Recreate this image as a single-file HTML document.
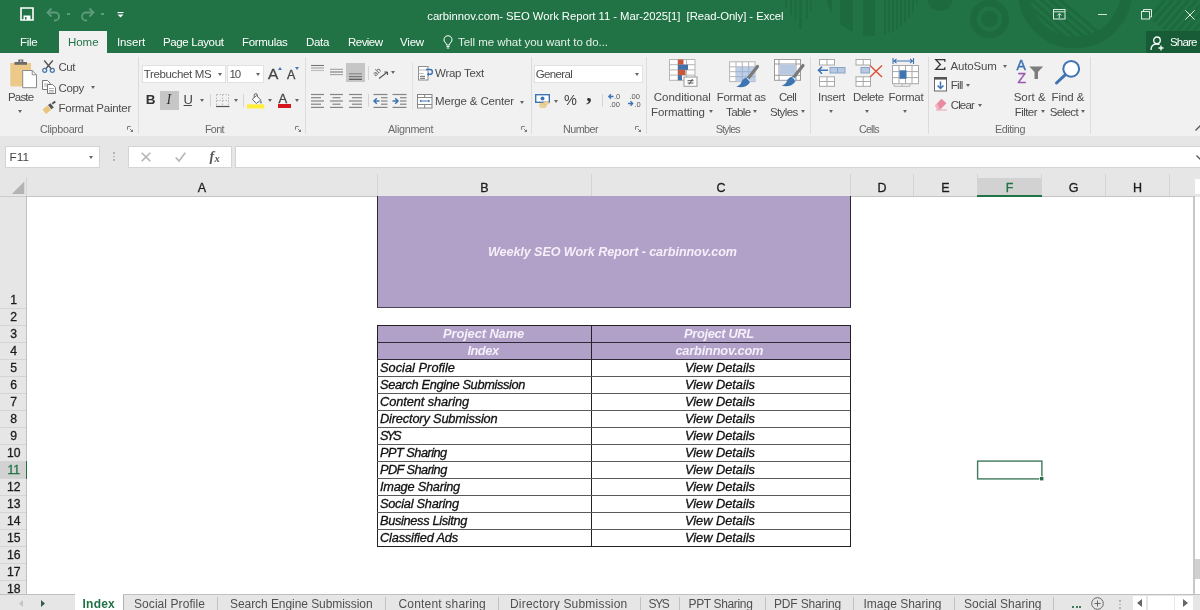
<!DOCTYPE html>
<html><head><meta charset="utf-8">
<style>
*{box-sizing:border-box;margin:0;padding:0}
html,body{width:1200px;height:610px;overflow:hidden;background:#fff}
body{font-family:"Liberation Sans",sans-serif;position:relative;color:#444}
.abs,.abs>*{position:absolute}
.t{position:absolute;white-space:pre;line-height:20px;height:20px}
#wrap{position:absolute;left:0;top:0;width:1200px;height:610px;will-change:transform}
#title{left:0;top:0;width:1200px;height:53px;background:#217346;overflow:hidden}
#ribbon{left:0;top:53px;width:1200px;height:83px;background:#f1f1f1}
#fbar{left:0;top:136px;width:1200px;height:42px;background:#e6e6e6}
#sheet{left:0;top:178px;width:1200px;height:416px;background:#fff;overflow:hidden}
#tabs{left:0;top:594px;width:1200px;height:16px;background:#e6e6e6;overflow:hidden}
.sep{position:absolute;width:1px;background:#dadada}
.dd{position:absolute;width:0;height:0;border-left:2.5px solid transparent;border-right:2.5px solid transparent;border-top:3px solid #666}
svg{position:absolute;overflow:visible}
</style></head><body><div id="wrap">
<div id="title" class="abs"></div>
<svg style="left:780px;top:0" width="420" height="53" viewBox="780 0 420 53">
 <defs>
  <clipPath id="c1"><circle cx="802" cy="-4" r="32"/></clipPath>
  <clipPath id="c2"><circle cx="872" cy="-11" r="47"/></clipPath>
  <clipPath id="c3"><circle cx="1075" cy="-9" r="46"/></clipPath>
  <clipPath id="c4"><circle cx="1192" cy="-14" r="52"/></clipPath>
  <clipPath id="cT"><rect x="780" y="0" width="420" height="53"/></clipPath>
 </defs>
 <g clip-path="url(#cT)">
 <g fill="#1d6a3e">
  <rect x="785" y="0" width="2" height="8"/><rect x="790" y="0" width="2" height="15"/><rect x="794.500" y="0" width="2" height="21"/><rect x="799" y="0" width="3" height="29"/><rect x="806" y="0" width="2" height="19"/><rect x="810" y="0" width="1.500" height="11"/>
  <g clip-path="url(#c2)"><rect x="824" y="0" width="8" height="40"/><rect x="840" y="0" width="13" height="40"/><rect x="863" y="0" width="12" height="40"/><rect x="884" y="0" width="2" height="40"/><rect x="888" y="0" width="2" height="40"/><rect x="892" y="0" width="2" height="40"/><rect x="896" y="0" width="2" height="40"/><rect x="900" y="0" width="2" height="40"/><rect x="904" y="0" width="2" height="40"/><rect x="908" y="0" width="2" height="40"/><rect x="912" y="0" width="2" height="40"/><rect x="916" y="0" width="2" height="40"/></g>
  <circle cx="940" cy="-2" r="13"/>
  <circle cx="989.500" cy="19" r="16" fill="none" stroke="#1d6a3e" stroke-width="7" />
  <circle cx="989.500" cy="19" r="8.500"/>
 </g>
 <circle cx="1075" cy="-9" r="51.500" fill="none" stroke="#1d6a3e" stroke-width="11.500"/>
 <g clip-path="url(#c3)" stroke="#1d6a3e" stroke-width="3.200">
  <path d="M1020 -2l60 52M1020 -10l70 60M1024 -15l72 62M1032 -16l70 60M1040 -17l66 56M1016 4l60 52M1012 10l60 52"/>
 </g>
 <g clip-path="url(#c4)" stroke="#1d6a3e" stroke-width="3.200">
  <path d="M1170 -6l-40 46M1178 -6l-40 46M1186 -6l-40 46M1194 -6l-40 46M1202 -6l-40 46M1210 -6l-40 46M1218 -6l-40 46M1226 -6l-40 46"/>
 </g>
 </g>
</svg>
<svg style="left:20px;top:7px" width="14" height="14" viewBox="0 0 14 14"><path d="M1 1h12v12H1z" fill="none" stroke="#fff" stroke-width="1.600"/><rect x="3.500" y="8.500" width="7" height="4.500" fill="#fff"/><rect x="5" y="10" width="1.500" height="2.500" fill="#217346"/><rect x="3" y="1" width="8" height="4.500" fill="none" stroke="#fff" stroke-width="0"/></svg>
<svg style="left:46px;top:8px" width="16" height="13" viewBox="0 0 16 13"><path d="M2 4.500h7a4 4 0 0 1 0 8H8" fill="none" stroke="#5c9c79" stroke-width="1.800"/><path d="M5.500 0.500L1.500 4.500l4 4" fill="none" stroke="#5c9c79" stroke-width="1.800"/></svg>
<svg style="left:79px;top:8px" width="16" height="13" viewBox="0 0 16 13"><path d="M14 4.500H7a4 4 0 0 0 0 8H8" fill="none" stroke="#5c9c79" stroke-width="1.800"/><path d="M10.500 0.500l4 4-4 4" fill="none" stroke="#5c9c79" stroke-width="1.800"/></svg>
<div class="abs" style="left:67px;top:13px;width:3px;height:2px;background:#5c9c79"></div>
<div class="abs" style="left:101px;top:13px;width:3px;height:2px;background:#5c9c79"></div>
<svg style="left:116.500px;top:11.800px" width="7" height="6" viewBox="0 0 7 6"><rect x=".5" y="0" width="6" height="1.100" fill="#fff"/><path d="M.5 2.500h6L3.500 5.500z" fill="#fff"/></svg>
<svg style="left:1053px;top:9px" width="13" height="11" viewBox="0 0 13 11"><rect x=".5" y=".5" width="11.500" height="9.500" fill="none" stroke="#dcebe2"/><path d="M.5 2.800h11.500" stroke="#dcebe2"/><path d="M6.300 9V4.800M4.300 6.500l2-2 2 2" fill="none" stroke="#dcebe2"/></svg>
<div class="abs" style="left:1098px;top:14px;width:9px;height:1px;background:#cfe3d7"></div>
<svg style="left:1141px;top:9px" width="11" height="11" viewBox="0 0 11 11"><path d="M2.500 2.500V.5h8v7.500h-2" fill="none" stroke="#dcebe2"/><rect x=".5" y="2.500" width="8" height="7.500" fill="none" stroke="#dcebe2"/></svg>
<svg style="left:1185px;top:9.500px" width="10" height="10" viewBox="0 0 10 10"><path d="M.3.300l9.400 9.400M9.700.3L.3 9.700" stroke="#e4f0e9" stroke-width="1"/></svg>
<div class="abs" style="left:1146px;top:31px;width:54px;height:22px;background:#185c37"></div>
<svg style="left:1149.500px;top:35.500px" width="14" height="15" viewBox="0 0 14 15"><circle cx="7" cy="4.300" r="3.300" fill="none" stroke="#fff" stroke-width="1.300"/><path d="M1 14c0-4 2.500-6 6-6 1 0 1.800.2 2.500.5" fill="none" stroke="#fff" stroke-width="1.300"/><path d="M11 9.500v5M8.500 12h5" stroke="#fff" stroke-width="1.300"/></svg>
<div class="abs" style="left:59px;top:31px;width:48px;height:23px;background:#f1f1f1"></div>
<svg style="left:443.300px;top:35.300px" width="10" height="14" viewBox="0 0 10 14"><path d="M5 .7a4 4 0 0 0-2.300 7.300c.5.500.8 1 .8 2h3c0-1 .3-1.500.8-2A4 4 0 0 0 5 .7z" fill="none" stroke="#fff" stroke-width="1"/><path d="M3.500 11.500h3M3.800 13h2.400" stroke="#fff" stroke-width="1"/></svg>

<div class="t" style="left:427.3px;top:5.8px;font-size:11.3px;color:#fff;letter-spacing:-0.052px;">carbinnov.com- SEO Work Report 11 - Mar-2025[1]  [Read-Only] - Excel</div>
<div class="t" style="left:1170.0px;top:32.3px;font-size:11.5px;color:#fff;letter-spacing:-0.797px;">Share</div>
<div class="t" style="left:20.0px;top:31.8px;font-size:11.5px;color:#fff;letter-spacing:-0.258px;">File</div>
<div class="t" style="left:68.0px;top:31.8px;font-size:11.5px;color:#217346;letter-spacing:-0.047px;">Home</div>
<div class="t" style="left:117.0px;top:31.8px;font-size:11.5px;color:#fff;letter-spacing:-0.128px;">Insert</div>
<div class="t" style="left:163.0px;top:31.8px;font-size:11.5px;color:#fff;letter-spacing:-0.372px;">Page Layout</div>
<div class="t" style="left:242.0px;top:31.8px;font-size:11.5px;color:#fff;letter-spacing:-0.305px;">Formulas</div>
<div class="t" style="left:306.0px;top:31.8px;font-size:11.5px;color:#fff;letter-spacing:-0.324px;">Data</div>
<div class="t" style="left:348.0px;top:31.8px;font-size:11.5px;color:#fff;letter-spacing:-0.536px;">Review</div>
<div class="t" style="left:400.0px;top:31.8px;font-size:11.5px;color:#fff;letter-spacing:-0.180px;">View</div>
<div class="t" style="left:458.0px;top:31.8px;font-size:11.5px;color:#e3efe8;letter-spacing:-0.050px;">Tell me what you want to do...</div>
<div id="ribbon" class="abs"></div>
<div class="sep" style="left:138.2px;top:57.0px;height:77.0px;background:#dcdcdc"></div>
<div class="sep" style="left:304.9px;top:57.0px;height:77.0px;background:#dcdcdc"></div>
<div class="sep" style="left:530.8px;top:57.0px;height:77.0px;background:#dcdcdc"></div>
<div class="sep" style="left:646.3px;top:57.0px;height:77.0px;background:#dcdcdc"></div>
<div class="sep" style="left:810.3px;top:57.0px;height:77.0px;background:#dcdcdc"></div>
<div class="sep" style="left:928.4px;top:57.0px;height:77.0px;background:#dcdcdc"></div>
<div class="sep" style="left:1090.0px;top:57.0px;height:77.0px;background:#dcdcdc"></div>
<svg style="left:9.0px;top:59.0px" width="29.0" height="30.0" viewBox="0 0 29 30"><rect x="1.300" y="4" width="20.700" height="23.400" fill="#ecc988"/><rect x="5.500" y="3" width="12.500" height="2.800" fill="#6b6b6b"/><rect x="9.300" y="0.500" width="5" height="3" fill="#6b6b6b"/><rect x="10.900" y="1.500" width="1.800" height="1.200" fill="#f1f1f1"/><path d="M13.700 11.500h9.500l4.300 4.300v12.900H13.700z" fill="#fff" stroke="#8a8a8a" stroke-width="1"/><path d="M23.200 11.500v4.300h4.300" fill="none" stroke="#8a8a8a" stroke-width="1"/></svg>
<div class="t" style="left:8.0px;top:87.2px;font-size:11.5px;color:#4c4c4c;letter-spacing:-0.824px;">Paste</div>
<div class="dd" style="left:18.2px;top:109.5px;border-top-color:#666"></div>
<svg style="left:42.0px;top:60.0px" width="13.0" height="13.0" viewBox="0 0 13 13"><path d="M2.200 0.500L9.600 9.300M10.800 0.500L3.400 9.300" stroke="#555" stroke-width="1.400" fill="none"/><circle cx="2.700" cy="10.300" r="2" fill="none" stroke="#4a78b0" stroke-width="1.300"/><circle cx="10.300" cy="10.300" r="2" fill="none" stroke="#4a78b0" stroke-width="1.300"/></svg>
<div class="t" style="left:58.5px;top:57.0px;font-size:11.5px;color:#4c4c4c;letter-spacing:-0.469px;">Cut</div>
<svg style="left:42.0px;top:80.0px" width="14.0" height="14.0" viewBox="0 0 14 14"><path d="M.5.500h5l2.500 2.500v6.500h-7.500z" fill="#fff" stroke="#777" stroke-width="1"/><path d="M2 4h4M2 6h4" stroke="#999" stroke-width=".8"/><path d="M5.500 4.500h5l3 3v6h-8z" fill="#fff" stroke="#777" stroke-width="1"/><path d="M7 8.500h5M7 10.500h5M7 12h5" stroke="#999" stroke-width=".8"/></svg>
<div class="t" style="left:58.5px;top:78.0px;font-size:11.5px;color:#4c4c4c;letter-spacing:-0.340px;">Copy</div>
<div class="dd" style="left:90.9px;top:86.0px;border-top-color:#666"></div>
<svg style="left:42.0px;top:101.0px" width="14.0" height="13.0" viewBox="0 0 14 13"><path d="M0.500 8.500l5-4 3.500 4.500-5 4z" fill="#e9c47c"/><path d="M6 4l2.500-1.800 3.300 4.300L9.300 8.300z" fill="#555"/><path d="M10.300 2.800l3-2.300" stroke="#555" stroke-width="2"/></svg>
<div class="t" style="left:58.5px;top:98.0px;font-size:11.5px;color:#4c4c4c;letter-spacing:-0.254px;">Format Painter</div>
<div class="t" style="left:40.0px;top:119.3px;font-size:10.8px;color:#6a6a6a;letter-spacing:-0.324px;">Clipboard</div>
<svg style="left:127.3px;top:126.4px" width="7" height="7" viewBox="0 0 7 7"><path d="M.5 3.800V.5H3.800" fill="none" stroke="#808080" stroke-width="1"/><path d="M2.800 2.800l2.500 2.500" stroke="#808080" stroke-width="1"/><path d="M6 3.200V6H3.200z" fill="#777"/></svg>
<div class="abs" style="left:141.5px;top:64.5px;width:84.0px;height:18.0px;background:#fff;border:1px solid #e1e1e1"></div>
<div class="abs" style="left:226.5px;top:64.5px;width:37.5px;height:18.0px;background:#fff;border:1px solid #e1e1e1"></div>
<div class="t" style="left:143.7px;top:63.8px;font-size:11.5px;color:#4c4c4c;letter-spacing:-0.341px;">Trebuchet MS</div>
<div class="dd" style="left:218.4px;top:72.5px;border-top-color:#666"></div>
<div class="t" style="left:229.4px;top:63.8px;font-size:11.5px;color:#4c4c4c;letter-spacing:-1.098px;">10</div>
<div class="dd" style="left:256.3px;top:72.5px;border-top-color:#666"></div>
<div class="t" style="left:268.0px;top:63.8px;font-size:15.5px;color:#444;letter-spacing:-0.144px;-webkit-text-stroke:.3px #444;">A</div>
<svg style="left:277.5px;top:66.5px" width="4.0" height="3.0" viewBox="0 0 4 3"><path d="M0 3L2 0l2 3z" fill="#4a78b0"/></svg>
<div class="t" style="left:287.0px;top:65.0px;font-size:12.5px;color:#444;letter-spacing:0.156px;-webkit-text-stroke:.3px #444;">A</div>
<svg style="left:295.0px;top:66.5px" width="4.0" height="3.0" viewBox="0 0 4 3"><path d="M0 0h4L2 3z" fill="#4a78b0"/></svg>
<div class="t" style="left:145.8px;top:89.5px;font-size:13.5px;color:#333;letter-spacing:-1.250px;font-weight:bold;">B</div>
<div class="abs" style="left:160.0px;top:91.0px;width:19.0px;height:19.0px;background:#c6c6c6;"></div>
<div class="t" style="left:166.5px;top:89.5px;font-size:14px;color:#333;letter-spacing:0.000px;font-family:'Liberation Serif',serif;font-style:italic;">I</div>
<div class="t" style="left:183.6px;top:89.5px;font-size:13px;color:#444;letter-spacing:-1.191px;text-decoration:underline;text-underline-offset:1px;">U</div>
<div class="dd" style="left:199.5px;top:99.0px;border-top-color:#666"></div>
<div class="sep" style="left:209.5px;top:94.0px;height:13.0px;background:#d4d4d4"></div>
<div class="sep" style="left:243.0px;top:94.0px;height:13.0px;background:#d4d4d4"></div>
<svg style="left:215.5px;top:94.0px" width="14.0" height="13.0" viewBox="0 0 14 13"><g stroke="#b9b9b9" stroke-width="1" stroke-dasharray="1.500 1.500" fill="none"><path d="M.5.500h12.500M.5 6.500h12.500M.5.500v12M6.500.5v12M12.500.5v12"/></g><path d="M0 12.500h13.500" stroke="#555" stroke-width="1.200"/></svg>
<div class="dd" style="left:233.5px;top:99.0px;border-top-color:#666"></div>
<svg style="left:247.0px;top:93.0px" width="17.5" height="16.0" viewBox="0 0 17.5 16"><rect x="0" y="11.300" width="17.200" height="4.200" fill="#ffef3a"/><path d="M5.300 6.200l4.200-3.700 4.300 4.600-4.500 3.300z" fill="#fff" stroke="#666" stroke-width="1"/><path d="M7.200 4.500V2.200a1.600 1.600 0 0 1 3.200 0v2" fill="none" stroke="#666" stroke-width="1"/><path d="M13.800 7.200c1 1.500 1.300 2.300.7 3-.6.500-1.300 0-1.300-.8z" fill="#4a78b0"/></svg>
<div class="dd" style="left:267.5px;top:99.0px;border-top-color:#666"></div>
<div class="t" style="left:278.5px;top:88.5px;font-size:13px;color:#444;letter-spacing:2.828px;-webkit-text-stroke:.3px #444;">A</div>
<div class="abs" style="left:277.5px;top:103.9px;width:13.5px;height:4.0px;background:#d4171d;"></div>
<div class="dd" style="left:295.3px;top:99.0px;border-top-color:#666"></div>
<div class="t" style="left:204.9px;top:119.3px;font-size:10.8px;color:#6a6a6a;letter-spacing:-0.627px;">Font</div>
<svg style="left:294.8px;top:126.4px" width="7" height="7" viewBox="0 0 7 7"><path d="M.5 3.800V.5H3.800" fill="none" stroke="#808080" stroke-width="1"/><path d="M2.800 2.800l2.500 2.500" stroke="#808080" stroke-width="1"/><path d="M6 3.200V6H3.200z" fill="#777"/></svg>
<svg style="left:0;top:0" width="600" height="140" viewBox="0 0 600 140"><path d="M311.0 65.5H324.0" stroke="#777" stroke-width="1.1"/><path d="M311.0 68.0H324.0" stroke="#a0a0a0" stroke-width="1.1"/><path d="M311.0 70.5H324.0" stroke="#bdbdbd" stroke-width="1.1"/><path d="M330.0 69.3H343.0" stroke="#a0a0a0" stroke-width="1.1"/><path d="M330.0 72.0H343.0" stroke="#777" stroke-width="1.1"/><path d="M330.0 74.6H343.0" stroke="#a0a0a0" stroke-width="1.1"/></svg>
<div class="abs" style="left:346.0px;top:63.2px;width:19.2px;height:19.1px;background:#c6c6c6;"></div>
<svg style="left:0;top:0" width="600" height="140" viewBox="0 0 600 140"><path d="M349.0 73.8H362.0" stroke="#8a8a8a" stroke-width="1.2"/><path d="M349.0 76.6H362.0" stroke="#777" stroke-width="1.2"/><path d="M349.0 79.3H362.0" stroke="#555" stroke-width="1.2"/><path d="M311.0 94.5H324.0" stroke="#858585" stroke-width="1.2"/><path d="M311.0 97.7H321.0" stroke="#858585" stroke-width="1.2"/><path d="M311.0 101.0H324.0" stroke="#858585" stroke-width="1.2"/><path d="M311.0 104.2H321.0" stroke="#858585" stroke-width="1.2"/><path d="M311.0 107.4H324.0" stroke="#858585" stroke-width="1.2"/><path d="M330.0 94.5H343.0" stroke="#858585" stroke-width="1.2"/><path d="M332.5 97.7H340.5" stroke="#858585" stroke-width="1.2"/><path d="M330.0 101.0H343.0" stroke="#858585" stroke-width="1.2"/><path d="M332.5 104.2H340.5" stroke="#858585" stroke-width="1.2"/><path d="M330.0 107.4H343.0" stroke="#858585" stroke-width="1.2"/><path d="M349.0 94.5H362.0" stroke="#858585" stroke-width="1.2"/><path d="M352.0 97.7H362.0" stroke="#858585" stroke-width="1.2"/><path d="M349.0 101.0H362.0" stroke="#858585" stroke-width="1.2"/><path d="M352.0 104.2H362.0" stroke="#858585" stroke-width="1.2"/><path d="M349.0 107.4H362.0" stroke="#858585" stroke-width="1.2"/><path d="M373.5 94.5H387.5" stroke="#858585" stroke-width="1.2"/><path d="M381.0 97.7H387.5" stroke="#858585" stroke-width="1.2"/><path d="M381.0 101.0H387.5" stroke="#858585" stroke-width="1.2"/><path d="M381.0 104.2H387.5" stroke="#858585" stroke-width="1.2"/><path d="M373.5 107.4H387.5" stroke="#858585" stroke-width="1.2"/><path d="M392.5 94.5H406.5" stroke="#858585" stroke-width="1.2"/><path d="M400.0 97.7H406.5" stroke="#858585" stroke-width="1.2"/><path d="M400.0 101.0H406.5" stroke="#858585" stroke-width="1.2"/><path d="M400.0 104.2H406.5" stroke="#858585" stroke-width="1.2"/><path d="M392.5 107.4H406.5" stroke="#858585" stroke-width="1.2"/><path d="M379.500 101h-5.500M376.800 98.200l-2.800 2.800 2.800 2.800" fill="none" stroke="#3f74b3" stroke-width="1.500"/><path d="M392.500 101h5.500M395.200 98.200l2.800 2.800-2.800 2.800" fill="none" stroke="#3f74b3" stroke-width="1.500"/></svg>
<div class="sep" style="left:368.0px;top:66.0px;height:14.0px;background:#d4d4d4"></div>
<div class="sep" style="left:367.5px;top:94.0px;height:13.0px;background:#d4d4d4"></div>
<div class="sep" style="left:412.4px;top:62.0px;height:48.0px;background:#e3e3e3"></div>
<svg style="left:374.5px;top:66.5px" width="14.0" height="12.0" viewBox="0 0 14 12"><text x="0" y="7.500" font-size="7.500" font-family="Liberation Sans" fill="#555" transform="rotate(-45 3 8)">ab</text><path d="M4 11.500l8.500-6.500M12.500 5h-3.200M12.500 5v3" fill="none" stroke="#555" stroke-width="1.100"/></svg>
<div class="dd" style="left:390.7px;top:71.0px;border-top-color:#666"></div>
<svg style="left:417.5px;top:66.0px" width="15.0" height="15.0" viewBox="0 0 15 15"><rect x=".5" y=".5" width="9.500" height="13.500" fill="#fff" stroke="#8c8c8c"/><path d="M.5 4h9.500M.5 7.500h5" stroke="#b8b8b8" stroke-width="1"/><path d="M2 10.300h5M2 12.300h5" stroke="#666" stroke-width="1"/><path d="M8 3.500h4a2.300 2.300 0 0 1 0 4.800H9.500" fill="none" stroke="#3f74b3" stroke-width="1.400"/><path d="M11 6.300L9 8.300l2 2z" fill="#3f74b3"/></svg>
<div class="t" style="left:435.0px;top:63.3px;font-size:11.5px;color:#4c4c4c;letter-spacing:-0.262px;">Wrap Text</div>
<svg style="left:417.0px;top:93.5px" width="15.5" height="14.5" viewBox="0 0 15.5 14.5"><rect x=".5" y=".5" width="14.500" height="13.500" fill="#fff" stroke="#858585"/><path d="M.5 3.500h14.500M.5 10.500h14.500M7.700.5v3M7.700 10.500v3.500" stroke="#858585" stroke-width="1"/><path d="M3 7h9.500" stroke="#3f74b3" stroke-width="1"/><path d="M2.500 7l1.800-1.600v3.200zM13 7l-1.800-1.600v3.200z" fill="#3f74b3"/></svg>
<div class="t" style="left:435.0px;top:91.2px;font-size:11.5px;color:#4c4c4c;letter-spacing:-0.156px;">Merge &amp; Center</div>
<div class="dd" style="left:520.0px;top:100.5px;border-top-color:#666"></div>
<div class="t" style="left:387.9px;top:119.3px;font-size:10.8px;color:#6a6a6a;letter-spacing:-0.302px;">Alignment</div>
<svg style="left:521.3px;top:126.4px" width="7" height="7" viewBox="0 0 7 7"><path d="M.5 3.800V.5H3.800" fill="none" stroke="#808080" stroke-width="1"/><path d="M2.800 2.800l2.500 2.500" stroke="#808080" stroke-width="1"/><path d="M6 3.200V6H3.200z" fill="#777"/></svg>
<div class="abs" style="left:534.0px;top:64.5px;width:108.5px;height:18.0px;background:#fff;border:1px solid #e1e1e1"></div>
<div class="t" style="left:535.8px;top:63.8px;font-size:11.5px;color:#4c4c4c;letter-spacing:-0.646px;">General</div>
<div class="dd" style="left:634.8px;top:72.5px;border-top-color:#666"></div>
<svg style="left:535.0px;top:93.5px" width="16.0" height="14.0" viewBox="0 0 16 14"><rect x=".7" y=".7" width="13.600" height="7.600" fill="#fff" stroke="#3f74b3" stroke-width="1.400"/><circle cx="7.500" cy="4.500" r="2" fill="#3f74b3"/><ellipse cx="8" cy="10.200" rx="3.500" ry="1.300" fill="#f1d9a4" stroke="#d9b76c" stroke-width=".6"/><ellipse cx="8" cy="12.200" rx="3.500" ry="1.300" fill="#f1d9a4" stroke="#d9b76c" stroke-width=".6"/><ellipse cx="11.500" cy="9" rx="3" ry="1.200" fill="#f1d9a4" stroke="#d9b76c" stroke-width=".6"/></svg>
<div class="dd" style="left:553.8px;top:99.5px;border-top-color:#666"></div>
<div class="t" style="left:564.0px;top:90.0px;font-size:14.5px;color:#444;letter-spacing:0.094px;">%</div>
<div class="t" style="left:586.3px;top:83.5px;font-size:22px;color:#333;letter-spacing:0.000px;font-family:'Liberation Serif',serif;font-weight:bold;">,</div>
<div class="sep" style="left:601.6px;top:94.0px;height:13.0px;background:#d4d4d4"></div>
<svg style="left:608.0px;top:93.0px" width="14.0" height="14.0" viewBox="0 0 14 14"><path d="M5.500 3.500H1M3 1.300L.8 3.500 3 5.700" fill="none" stroke="#3f74b3" stroke-width="1.300"/><text x="6" y="6" font-size="7.500" font-family="Liberation Sans" fill="#555">.0</text><text x="1.500" y="13.500" font-size="7.500" font-family="Liberation Sans" fill="#555">.00</text></svg>
<svg style="left:627.0px;top:93.0px" width="14.0" height="14.0" viewBox="0 0 14 14"><text x="2.500" y="6" font-size="7.500" font-family="Liberation Sans" fill="#555">.00</text><path d="M1 10.500h4.500M3.500 8.300l2.200 2.200-2.200 2.200" fill="none" stroke="#3f74b3" stroke-width="1.300"/><text x="7.500" y="13.500" font-size="7.500" font-family="Liberation Sans" fill="#555">.0</text></svg>
<div class="t" style="left:563.0px;top:119.3px;font-size:10.8px;color:#6a6a6a;letter-spacing:-0.568px;">Number</div>
<svg style="left:635.3px;top:126.4px" width="7" height="7" viewBox="0 0 7 7"><path d="M.5 3.800V.5H3.800" fill="none" stroke="#808080" stroke-width="1"/><path d="M2.800 2.800l2.500 2.500" stroke="#808080" stroke-width="1"/><path d="M6 3.200V6H3.200z" fill="#777"/></svg>
<svg style="left:0;top:0" width="1200" height="140" viewBox="0 0 1200 140"><rect x="669.5" y="59.5" width="25.5" height="20.8" fill="#fff" stroke="#b5b5b5" stroke-width="1"/><path d="M678.0 59.5V80.3" stroke="#b5b5b5" stroke-width="1"/><path d="M686.5 59.5V80.3" stroke="#b5b5b5" stroke-width="1"/><path d="M669.5 64.7H695.0" stroke="#b5b5b5" stroke-width="1"/><path d="M669.5 69.9H695.0" stroke="#b5b5b5" stroke-width="1"/><path d="M669.5 75.1H695.0" stroke="#b5b5b5" stroke-width="1"/><rect x="678" y="59.500" width="5.500" height="5.200" fill="#c8573b"/><rect x="678" y="64.700" width="10" height="5.200" fill="#4472a8"/><rect x="678" y="69.900" width="7.500" height="5.200" fill="#c8573b"/><rect x="678" y="75.100" width="4" height="5.200" fill="#4472a8"/><rect x="684" y="77" width="13" height="9.300" fill="#fff" stroke="#9a9a9a"/><path d="M687.500 80.700h6M687.500 83h6M692.500 79l-3.500 5.500" stroke="#444" stroke-width=".9" fill="none"/><rect x="729.6" y="61.8" width="25.4" height="19.8" fill="#fff" stroke="#b5b5b5" stroke-width="1"/><path d="M736.0 61.8V81.6" stroke="#b5b5b5" stroke-width="1"/><path d="M742.3 61.8V81.6" stroke="#b5b5b5" stroke-width="1"/><path d="M748.6 61.8V81.6" stroke="#b5b5b5" stroke-width="1"/><path d="M729.6 66.8H755.0" stroke="#b5b5b5" stroke-width="1"/><path d="M729.6 71.7H755.0" stroke="#b5b5b5" stroke-width="1"/><path d="M729.6 76.6H755.0" stroke="#b5b5b5" stroke-width="1"/><rect x="736" y="66.800" width="19" height="14.800" fill="#b7c9e2" opacity=".9"/><path d="M742.300 66.800v14.800M748.700 66.800v14.800M736 71.700h19M736 76.700h19" stroke="#9db3d3" stroke-width="1"/><path d="M757.500 66.500l-9.500 12" stroke="#7a7a7a" stroke-width="3.200" stroke-linecap="round"/><path d="M748.500 78c-3-1-6 1-7 4-1 2.500-3 4-5.500 4.500 5 1.500 11 .5 13.500-3.500 1-1.800.8-3.800-1-5z" fill="#3f74b3"/><path d="M747 78.500c1.500.3 2.500 1.300 2.700 2.800" stroke="#e8eef6" stroke-width="1.200" fill="none"/><rect x="774.5" y="59.5" width="26.0" height="20.8" fill="#fff" stroke="#9a9a9a" stroke-width="1"/><path d="M779 59.500v20.800M796 59.500v20.800M774.500 64h26M774.500 75.300h26" stroke="#9a9a9a" stroke-width="1"/><rect x="779.500" y="64.500" width="16" height="10.300" fill="#b7c9e2"/><path d="M803 65.500l-9.500 12" stroke="#7a7a7a" stroke-width="3.200" stroke-linecap="round"/><path d="M794 77c-3-1-6 1-7 4-1 2.500-3 4-5.500 4.500 5 1.500 11 .5 13.500-3.500 1-1.800.8-3.800-1-5z" fill="#3f74b3"/><path d="M792.500 77.500c1.500.3 2.500 1.300 2.700 2.800" stroke="#e8eef6" stroke-width="1.200" fill="none"/></svg>
<div class="t" style="left:653.8px;top:87.2px;font-size:11.5px;color:#4c4c4c;letter-spacing:-0.041px;">Conditional</div>
<div class="t" style="left:651.0px;top:101.6px;font-size:11.5px;color:#4c4c4c;letter-spacing:-0.117px;">Formatting</div>
<div class="dd" style="left:708.5px;top:110.0px;border-top-color:#666"></div>
<div class="t" style="left:716.8px;top:87.2px;font-size:11.5px;color:#4c4c4c;letter-spacing:-0.318px;">Format as</div>
<div class="t" style="left:726.0px;top:101.6px;font-size:11.5px;color:#4c4c4c;letter-spacing:-0.600px;">Table</div>
<div class="dd" style="left:753.3px;top:110.0px;border-top-color:#666"></div>
<div class="t" style="left:779.0px;top:87.2px;font-size:11.5px;color:#4c4c4c;letter-spacing:-0.703px;">Cell</div>
<div class="t" style="left:770.0px;top:101.6px;font-size:11.5px;color:#4c4c4c;letter-spacing:-0.621px;">Styles</div>
<div class="dd" style="left:801.0px;top:110.0px;border-top-color:#666"></div>
<div class="t" style="left:715.7px;top:119.3px;font-size:10.8px;color:#6a6a6a;letter-spacing:-0.884px;">Styles</div>
<svg style="left:0;top:0" width="1200" height="140" viewBox="0 0 1200 140"><rect x="819.5" y="59.5" width="15.0" height="5.5" fill="#fff" stroke="#a8a8a8" stroke-width="1"/><path d="M827.0 59.5V65.0" stroke="#a8a8a8" stroke-width="1"/><rect x="819.5" y="76.8" width="15.0" height="9.5" fill="#fff" stroke="#a8a8a8" stroke-width="1"/><path d="M827.0 76.8V86.3" stroke="#a8a8a8" stroke-width="1"/><path d="M819.5 81.5H834.5" stroke="#a8a8a8" stroke-width="1"/><rect x="830" y="67.500" width="15" height="5.500" fill="#b7c9e2" stroke="#8aa4c8" stroke-width="1"/><path d="M837.500 67.500v5.500" stroke="#8aa4c8"/><path d="M828 70.300h-9.500M822 66.800l-3.500 3.500 3.500 3.500" fill="none" stroke="#3f74b3" stroke-width="1.600"/><rect x="856.0" y="59.5" width="14.5" height="5.5" fill="#fff" stroke="#a8a8a8" stroke-width="1"/><path d="M863.2 59.5V65.0" stroke="#a8a8a8" stroke-width="1"/><rect x="856.0" y="76.8" width="14.5" height="9.5" fill="#fff" stroke="#a8a8a8" stroke-width="1"/><path d="M863.2 76.8V86.3" stroke="#a8a8a8" stroke-width="1"/><path d="M856.0 81.5H870.5" stroke="#a8a8a8" stroke-width="1"/><rect x="861" y="67.500" width="8.500" height="5.500" fill="#b7c9e2" stroke="#8aa4c8" stroke-width="1"/><path d="M870 65.500l12 11.500M882 65.500l-12 11.500" stroke="#d9553c" stroke-width="1.500"/><path d="M893.500 61h19.500M893 58v6M913.500 58v6M896.500 58.800l-2.500 2.200 2.500 2.200M910 58.800l2.500 2.200-2.500 2.200" fill="none" stroke="#3f74b3" stroke-width="1.100"/><rect x="892.5" y="65.5" width="26.0" height="18.2" fill="#fff" stroke="#a8a8a8" stroke-width="1"/><path d="M899.0 65.5V83.7" stroke="#a8a8a8" stroke-width="1"/><path d="M905.5 65.5V83.7" stroke="#a8a8a8" stroke-width="1"/><path d="M912.0 65.5V83.7" stroke="#a8a8a8" stroke-width="1"/><path d="M892.5 71.6H918.5" stroke="#a8a8a8" stroke-width="1"/><path d="M892.5 77.6H918.5" stroke="#a8a8a8" stroke-width="1"/><rect x="899.500" y="70.300" width="7" height="8.500" fill="#3f74b3"/><path d="M894 83.700v2.600h8v-2.600M902 86.300h8v-2.600" fill="none" stroke="#b5b5b5"/></svg>
<div class="t" style="left:818.0px;top:87.2px;font-size:11.5px;color:#4c4c4c;letter-spacing:-0.294px;">Insert</div>
<div class="dd" style="left:828.5px;top:110.0px;border-top-color:#666"></div>
<div class="t" style="left:853.0px;top:87.2px;font-size:11.5px;color:#4c4c4c;letter-spacing:-0.408px;">Delete</div>
<div class="dd" style="left:865.3px;top:110.0px;border-top-color:#666"></div>
<div class="t" style="left:888.5px;top:87.2px;font-size:11.5px;color:#4c4c4c;letter-spacing:-0.254px;">Format</div>
<div class="dd" style="left:903.0px;top:110.0px;border-top-color:#666"></div>
<div class="t" style="left:859.0px;top:119.3px;font-size:10.8px;color:#6a6a6a;letter-spacing:-0.840px;">Cells</div>
<svg style="left:934.8px;top:59.0px" width="10.5" height="11.0" viewBox="0 0 10.5 11"><path d="M9.800 2.800V.6H.8l4.600 4.900L.8 10.400h9v-2.200" fill="none" stroke="#333" stroke-width="1.300"/></svg>
<div class="t" style="left:950.4px;top:55.6px;font-size:11.5px;color:#4c4c4c;letter-spacing:-0.145px;">AutoSum</div>
<div class="dd" style="left:1003.1px;top:64.5px;border-top-color:#666"></div>
<svg style="left:934.0px;top:77.0px" width="13.0" height="14.5" viewBox="0 0 13 14.5"><rect x=".5" y="1" width="12" height="13" fill="#fff" stroke="#666"/><rect x="0" y="0" width="13" height="2.600" fill="#555"/><path d="M6.500 4.500v7M3.500 8.500l3 3 3-3" fill="none" stroke="#3f74b3" stroke-width="1.500"/></svg>
<div class="t" style="left:950.7px;top:74.9px;font-size:11.5px;color:#4c4c4c;letter-spacing:-0.676px;">Fill</div>
<div class="dd" style="left:966.3px;top:84.0px;border-top-color:#666"></div>
<svg style="left:934.0px;top:98.0px" width="14.0" height="12.5" viewBox="0 0 14 12.5"><path d="M1 7.500L7.500.8l5 4.500-6.500 6.500H3.500z" fill="#e98aa2"/><path d="M1 7.500l2.500 4.300H6L3.200 5.300z" fill="#f3b5c3"/><path d="M2 12h11" stroke="#e9a3b3" stroke-width="1"/></svg>
<div class="t" style="left:950.7px;top:94.7px;font-size:11.5px;color:#4c4c4c;letter-spacing:-0.837px;">Clear</div>
<div class="dd" style="left:977.6px;top:103.5px;border-top-color:#666"></div>
<div class="t" style="left:1016.5px;top:54.7px;font-size:14px;color:#3f74b3;letter-spacing:0.156px;-webkit-text-stroke:.45px #3f74b3;">A</div>
<div class="t" style="left:1017.5px;top:67.7px;font-size:14px;color:#9a5bb0;letter-spacing:-0.362px;-webkit-text-stroke:.45px #9a5bb0;">Z</div>
<svg style="left:1028.5px;top:66.0px" width="14.5" height="13.5" viewBox="0 0 14.5 13.5"><path d="M.3.500h13.900L9 6v7H5.500V6z" fill="#7d7d7d"/></svg>
<div class="t" style="left:1013.7px;top:87.2px;font-size:11.5px;color:#4c4c4c;letter-spacing:-0.011px;">Sort &amp;</div>
<div class="t" style="left:1014.7px;top:101.6px;font-size:11.5px;color:#4c4c4c;letter-spacing:-0.544px;">Filter</div>
<div class="dd" style="left:1040.5px;top:110.0px;border-top-color:#666"></div>
<svg style="left:1054.0px;top:59.0px" width="28.0" height="26.0" viewBox="0 0 28 26"><circle cx="17.200" cy="9.800" r="7.900" fill="#fff" stroke="#3f74b3" stroke-width="2"/><path d="M11.200 15.800L2.500 24" stroke="#3f74b3" stroke-width="3" stroke-linecap="round"/></svg>
<div class="t" style="left:1051.5px;top:87.2px;font-size:11.5px;color:#4c4c4c;letter-spacing:-0.042px;">Find &amp;</div>
<div class="t" style="left:1049.8px;top:101.6px;font-size:11.5px;color:#4c4c4c;letter-spacing:-0.628px;">Select</div>
<div class="dd" style="left:1081.3px;top:110.0px;border-top-color:#666"></div>
<div class="t" style="left:994.9px;top:119.3px;font-size:10.8px;color:#6a6a6a;letter-spacing:-0.417px;">Editing</div>
<svg style="left:1195.0px;top:125.0px" width="9.0" height="6.0" viewBox="0 0 9 6"><path d="M.5 5.500l4.500-4.500 4.500 4.500" fill="none" stroke="#555" stroke-width="1.300"/></svg>
<div id="fbar" class="abs"></div>
<div class="abs" style="left:5.3px;top:146.3px;width:94.3px;height:22.2px;background:#fff;border:1px solid #d4d4d4"></div>
<div class="abs" style="left:128.3px;top:146.3px;width:104.2px;height:22.2px;background:#fff;border:1px solid #d4d4d4"></div>
<div class="abs" style="left:234.8px;top:146.3px;width:965.2px;height:22.2px;background:#fff;border:1px solid #d4d4d4;border-right:0"></div>
<div class="t" style="left:9.5px;top:147.3px;font-size:11.8px;color:#444;letter-spacing:0.016px;">F11</div>
<div class="dd" style="left:88.500px;top:156px;border-top-color:#666"></div>
<div class="abs" style="left:113.0px;top:152.0px;width:2.4px;height:1.8px;background:#b4b4b4;"></div>
<div class="abs" style="left:113.0px;top:155.7px;width:2.4px;height:1.8px;background:#b4b4b4;"></div>
<div class="abs" style="left:113.0px;top:159.4px;width:2.4px;height:1.8px;background:#b4b4b4;"></div>
<svg style="left:141px;top:152px" width="10" height="10" viewBox="0 0 10 10"><path d="M.7.700l8.600 8.600M9.300.7L.7 9.300" stroke="#b4b4b4" stroke-width="1.600"/></svg>
<svg style="left:175px;top:152px" width="11" height="10" viewBox="0 0 11 10"><path d="M.7 5.500l3.300 3.500L10.300.7" fill="none" stroke="#b4b4b4" stroke-width="1.600"/></svg>
<div class="t" style="left:209.5px;top:146.5px;font-size:14px;color:#555;letter-spacing:0.000px;font-family:'Liberation Serif',serif;font-style:italic;font-weight:bold;">f</div>
<div class="t" style="left:214.5px;top:148.5px;font-size:10.5px;color:#555;letter-spacing:0.000px;font-family:'Liberation Serif',serif;font-style:italic;font-weight:bold;">x</div>
<svg style="left:1195.500px;top:154.500px" width="9" height="6" viewBox="0 0 9 6"><path d="M.5.500l4.500 4.500L9.500.5" fill="none" stroke="#555" stroke-width="1.300"/></svg>
<div id="sheet" class="abs"></div>
<div class="abs" style="left:0.0px;top:168.0px;width:1200.0px;height:28.0px;background:#e6e6e6;"></div>
<div class="abs" style="left:977.0px;top:178.0px;width:64.5px;height:18.0px;background:#d2d2d2;"></div>
<div class="abs" style="left:377.0px;top:174.0px;width:1.0px;height:22.0px;background:#d4d4d4;"></div>
<div class="abs" style="left:591.0px;top:174.0px;width:1.0px;height:22.0px;background:#d4d4d4;"></div>
<div class="abs" style="left:850.0px;top:174.0px;width:1.0px;height:22.0px;background:#d4d4d4;"></div>
<div class="abs" style="left:913.0px;top:174.0px;width:1.0px;height:22.0px;background:#d4d4d4;"></div>
<div class="abs" style="left:977.0px;top:174.0px;width:1.0px;height:22.0px;background:#d4d4d4;"></div>
<div class="abs" style="left:1041.0px;top:174.0px;width:1.0px;height:22.0px;background:#d4d4d4;"></div>
<div class="abs" style="left:1105.0px;top:174.0px;width:1.0px;height:22.0px;background:#d4d4d4;"></div>
<div class="abs" style="left:1169.0px;top:174.0px;width:1.0px;height:22.0px;background:#d4d4d4;"></div>
<div class="abs" style="left:0.0px;top:195.7px;width:1195.0px;height:1.0px;background:#c4c4c4;"></div>
<div class="abs" style="left:977.0px;top:195.0px;width:64.5px;height:1.7px;background:#217346;"></div>
<div class="t" style="left:197.0px;top:178.1px;font-size:12.5px;color:#1c1c1c;letter-spacing:0.000px;text-align:center;width:10px;-webkit-text-stroke:.3px;">A</div>
<div class="t" style="left:479.5px;top:178.1px;font-size:12.5px;color:#1c1c1c;letter-spacing:0.000px;text-align:center;width:10px;-webkit-text-stroke:.3px;">B</div>
<div class="t" style="left:716.0px;top:178.1px;font-size:12.5px;color:#1c1c1c;letter-spacing:0.000px;text-align:center;width:10px;-webkit-text-stroke:.3px;">C</div>
<div class="t" style="left:877.0px;top:178.1px;font-size:12.5px;color:#1c1c1c;letter-spacing:0.000px;text-align:center;width:10px;-webkit-text-stroke:.3px;">D</div>
<div class="t" style="left:940.5px;top:178.1px;font-size:12.5px;color:#1c1c1c;letter-spacing:0.000px;text-align:center;width:10px;-webkit-text-stroke:.3px;">E</div>
<div class="t" style="left:1004.5px;top:178.1px;font-size:12.5px;color:#217346;letter-spacing:0.000px;text-align:center;width:10px;-webkit-text-stroke:.3px;">F</div>
<div class="t" style="left:1068.5px;top:178.1px;font-size:12.5px;color:#1c1c1c;letter-spacing:0.000px;text-align:center;width:10px;-webkit-text-stroke:.3px;">G</div>
<div class="t" style="left:1132.5px;top:178.1px;font-size:12.5px;color:#1c1c1c;letter-spacing:0.000px;text-align:center;width:10px;-webkit-text-stroke:.3px;">H</div>
<div class="abs" style="left:0.0px;top:196.0px;width:26.0px;height:398.0px;background:#e6e6e6;"></div>
<div class="abs" style="left:0.0px;top:195.7px;width:26.0px;height:1.0px;background:#cccccc;"></div>
<div class="abs" style="left:0.0px;top:461.0px;width:26.0px;height:18.0px;background:#d2d2d2;"></div>
<div class="abs" style="left:0.0px;top:308.0px;width:26.0px;height:1.0px;background:#d4d4d4;"></div>
<div class="abs" style="left:0.0px;top:325.0px;width:26.0px;height:1.0px;background:#d4d4d4;"></div>
<div class="abs" style="left:0.0px;top:342.0px;width:26.0px;height:1.0px;background:#d4d4d4;"></div>
<div class="abs" style="left:0.0px;top:359.0px;width:26.0px;height:1.0px;background:#d4d4d4;"></div>
<div class="abs" style="left:0.0px;top:376.0px;width:26.0px;height:1.0px;background:#d4d4d4;"></div>
<div class="abs" style="left:0.0px;top:393.0px;width:26.0px;height:1.0px;background:#d4d4d4;"></div>
<div class="abs" style="left:0.0px;top:410.0px;width:26.0px;height:1.0px;background:#d4d4d4;"></div>
<div class="abs" style="left:0.0px;top:427.0px;width:26.0px;height:1.0px;background:#d4d4d4;"></div>
<div class="abs" style="left:0.0px;top:444.0px;width:26.0px;height:1.0px;background:#d4d4d4;"></div>
<div class="abs" style="left:0.0px;top:461.0px;width:26.0px;height:1.0px;background:#d4d4d4;"></div>
<div class="abs" style="left:0.0px;top:478.0px;width:26.0px;height:1.0px;background:#d4d4d4;"></div>
<div class="abs" style="left:0.0px;top:495.0px;width:26.0px;height:1.0px;background:#d4d4d4;"></div>
<div class="abs" style="left:0.0px;top:512.0px;width:26.0px;height:1.0px;background:#d4d4d4;"></div>
<div class="abs" style="left:0.0px;top:529.0px;width:26.0px;height:1.0px;background:#d4d4d4;"></div>
<div class="abs" style="left:0.0px;top:546.0px;width:26.0px;height:1.0px;background:#d4d4d4;"></div>
<div class="abs" style="left:0.0px;top:563.0px;width:26.0px;height:1.0px;background:#d4d4d4;"></div>
<div class="abs" style="left:0.0px;top:580.0px;width:26.0px;height:1.0px;background:#d4d4d4;"></div>
<div class="abs" style="left:26.0px;top:177.0px;width:1.0px;height:19.0px;background:#d4d4d4;"></div>
<div class="abs" style="left:26.0px;top:196.0px;width:1.0px;height:398.0px;background:#c0c0c0;"></div>
<div class="abs" style="left:25.5px;top:461.0px;width:1.5px;height:18.0px;background:#217346;"></div>
<svg style="left:11px;top:181px" width="14" height="14" viewBox="0 0 14 14"><path d="M13.300.5v12.500H.8z" fill="#b3b3b3"/></svg>
<div class="t" style="left:0.0px;top:290.2px;font-size:12.2px;color:#1c1c1c;letter-spacing:0.000px;text-align:center;width:27.500px;-webkit-text-stroke:.3px;">1</div>
<div class="t" style="left:0.0px;top:307.2px;font-size:12.2px;color:#1c1c1c;letter-spacing:0.000px;text-align:center;width:27.500px;-webkit-text-stroke:.3px;">2</div>
<div class="t" style="left:0.0px;top:324.2px;font-size:12.2px;color:#1c1c1c;letter-spacing:0.000px;text-align:center;width:27.500px;-webkit-text-stroke:.3px;">3</div>
<div class="t" style="left:0.0px;top:341.2px;font-size:12.2px;color:#1c1c1c;letter-spacing:0.000px;text-align:center;width:27.500px;-webkit-text-stroke:.3px;">4</div>
<div class="t" style="left:0.0px;top:358.2px;font-size:12.2px;color:#1c1c1c;letter-spacing:0.000px;text-align:center;width:27.500px;-webkit-text-stroke:.3px;">5</div>
<div class="t" style="left:0.0px;top:375.2px;font-size:12.2px;color:#1c1c1c;letter-spacing:0.000px;text-align:center;width:27.500px;-webkit-text-stroke:.3px;">6</div>
<div class="t" style="left:0.0px;top:392.2px;font-size:12.2px;color:#1c1c1c;letter-spacing:0.000px;text-align:center;width:27.500px;-webkit-text-stroke:.3px;">7</div>
<div class="t" style="left:0.0px;top:409.2px;font-size:12.2px;color:#1c1c1c;letter-spacing:0.000px;text-align:center;width:27.500px;-webkit-text-stroke:.3px;">8</div>
<div class="t" style="left:0.0px;top:426.2px;font-size:12.2px;color:#1c1c1c;letter-spacing:0.000px;text-align:center;width:27.500px;-webkit-text-stroke:.3px;">9</div>
<div class="t" style="left:0.0px;top:443.2px;font-size:12.2px;color:#1c1c1c;letter-spacing:0.000px;text-align:center;width:27.500px;-webkit-text-stroke:.3px;">10</div>
<div class="t" style="left:0.0px;top:460.2px;font-size:12.2px;color:#217346;letter-spacing:0.000px;text-align:center;width:27.500px;-webkit-text-stroke:.3px;">11</div>
<div class="t" style="left:0.0px;top:477.2px;font-size:12.2px;color:#1c1c1c;letter-spacing:0.000px;text-align:center;width:27.500px;-webkit-text-stroke:.3px;">12</div>
<div class="t" style="left:0.0px;top:494.2px;font-size:12.2px;color:#1c1c1c;letter-spacing:0.000px;text-align:center;width:27.500px;-webkit-text-stroke:.3px;">13</div>
<div class="t" style="left:0.0px;top:511.2px;font-size:12.2px;color:#1c1c1c;letter-spacing:0.000px;text-align:center;width:27.500px;-webkit-text-stroke:.3px;">14</div>
<div class="t" style="left:0.0px;top:528.2px;font-size:12.2px;color:#1c1c1c;letter-spacing:0.000px;text-align:center;width:27.500px;-webkit-text-stroke:.3px;">15</div>
<div class="t" style="left:0.0px;top:545.2px;font-size:12.2px;color:#1c1c1c;letter-spacing:0.000px;text-align:center;width:27.500px;-webkit-text-stroke:.3px;">16</div>
<div class="t" style="left:0.0px;top:562.2px;font-size:12.2px;color:#1c1c1c;letter-spacing:0.000px;text-align:center;width:27.500px;-webkit-text-stroke:.3px;">17</div>
<div class="t" style="left:0.0px;top:579.2px;font-size:12.2px;color:#1c1c1c;letter-spacing:0.000px;text-align:center;width:27.500px;-webkit-text-stroke:.3px;">18</div>
<div class="abs" style="left:377.0px;top:196.0px;width:473.5px;height:112.4px;background:#b1a0c7;border:1px solid #2f2a36;border-top:0;border-bottom-color:#4a4456"></div>
<div class="t" style="left:488.0px;top:242.1px;font-size:12.6px;color:#f4f0fa;letter-spacing:-0.084px;font-weight:bold;font-style:italic;">Weekly SEO Work Report - carbinnov.com</div>
<div class="abs" style="left:377.0px;top:325.0px;width:473.5px;height:221.5px;background:#fff;border:1px solid #222"></div>
<div class="abs" style="left:378.0px;top:326.0px;width:472.0px;height:33.0px;background:#b1a0c7;"></div>
<div class="abs" style="left:591.0px;top:325.0px;width:1.0px;height:221.0px;background:#222;"></div>
<div class="abs" style="left:377.0px;top:342.0px;width:473.0px;height:1.0px;background:#2f2a36;"></div>
<div class="abs" style="left:377.0px;top:359.0px;width:473.0px;height:1.0px;background:#2f2a36;"></div>
<div class="abs" style="left:377.0px;top:376.0px;width:473.0px;height:1.0px;background:#5a5a5a;"></div>
<div class="abs" style="left:377.0px;top:393.0px;width:473.0px;height:1.0px;background:#5a5a5a;"></div>
<div class="abs" style="left:377.0px;top:410.0px;width:473.0px;height:1.0px;background:#5a5a5a;"></div>
<div class="abs" style="left:377.0px;top:427.0px;width:473.0px;height:1.0px;background:#5a5a5a;"></div>
<div class="abs" style="left:377.0px;top:444.0px;width:473.0px;height:1.0px;background:#5a5a5a;"></div>
<div class="abs" style="left:377.0px;top:461.0px;width:473.0px;height:1.0px;background:#5a5a5a;"></div>
<div class="abs" style="left:377.0px;top:478.0px;width:473.0px;height:1.0px;background:#5a5a5a;"></div>
<div class="abs" style="left:377.0px;top:495.0px;width:473.0px;height:1.0px;background:#5a5a5a;"></div>
<div class="abs" style="left:377.0px;top:512.0px;width:473.0px;height:1.0px;background:#5a5a5a;"></div>
<div class="abs" style="left:377.0px;top:529.0px;width:473.0px;height:1.0px;background:#5a5a5a;"></div>
<div class="t" style="left:443.0px;top:324.2px;font-size:12.8px;color:#f4f0fa;letter-spacing:-0.066px;font-weight:bold;font-style:italic;">Project Name</div>
<div class="t" style="left:467.4px;top:341.2px;font-size:12.8px;color:#f4f0fa;letter-spacing:-0.447px;font-weight:bold;font-style:italic;">Index</div>
<div class="t" style="left:684.0px;top:324.2px;font-size:12.8px;color:#f4f0fa;letter-spacing:-0.314px;font-weight:bold;font-style:italic;">Project URL</div>
<div class="t" style="left:675.4px;top:341.2px;font-size:12.8px;color:#f4f0fa;letter-spacing:-0.187px;font-weight:bold;font-style:italic;">carbinnov.com</div>
<div class="t" style="left:380.0px;top:358.3px;font-size:12.8px;color:#111;letter-spacing:0.022px;font-style:italic;-webkit-text-stroke:.3px #111;">Social Profile</div>
<div class="t" style="left:685.0px;top:358.3px;font-size:12.8px;color:#111;letter-spacing:-0.016px;font-style:italic;-webkit-text-stroke:.3px #111;">View Details</div>
<div class="t" style="left:380.0px;top:375.3px;font-size:12.8px;color:#111;letter-spacing:-0.361px;font-style:italic;-webkit-text-stroke:.3px #111;">Search Engine Submission</div>
<div class="t" style="left:685.0px;top:375.3px;font-size:12.8px;color:#111;letter-spacing:-0.016px;font-style:italic;-webkit-text-stroke:.3px #111;">View Details</div>
<div class="t" style="left:380.0px;top:392.3px;font-size:12.8px;color:#111;letter-spacing:-0.091px;font-style:italic;-webkit-text-stroke:.3px #111;">Content sharing</div>
<div class="t" style="left:685.0px;top:392.3px;font-size:12.8px;color:#111;letter-spacing:-0.016px;font-style:italic;-webkit-text-stroke:.3px #111;">View Details</div>
<div class="t" style="left:380.0px;top:409.3px;font-size:12.8px;color:#111;letter-spacing:-0.170px;font-style:italic;-webkit-text-stroke:.3px #111;">Directory Submission</div>
<div class="t" style="left:685.0px;top:409.3px;font-size:12.8px;color:#111;letter-spacing:-0.016px;font-style:italic;-webkit-text-stroke:.3px #111;">View Details</div>
<div class="t" style="left:380.0px;top:426.3px;font-size:12.8px;color:#111;letter-spacing:-2.003px;font-style:italic;-webkit-text-stroke:.3px #111;">SYS</div>
<div class="t" style="left:685.0px;top:426.3px;font-size:12.8px;color:#111;letter-spacing:-0.016px;font-style:italic;-webkit-text-stroke:.3px #111;">View Details</div>
<div class="t" style="left:380.0px;top:443.3px;font-size:12.8px;color:#111;letter-spacing:-0.533px;font-style:italic;-webkit-text-stroke:.3px #111;">PPT Sharing</div>
<div class="t" style="left:685.0px;top:443.3px;font-size:12.8px;color:#111;letter-spacing:-0.016px;font-style:italic;-webkit-text-stroke:.3px #111;">View Details</div>
<div class="t" style="left:380.0px;top:460.3px;font-size:12.8px;color:#111;letter-spacing:-0.576px;font-style:italic;-webkit-text-stroke:.3px #111;">PDF Sharing</div>
<div class="t" style="left:685.0px;top:460.3px;font-size:12.8px;color:#111;letter-spacing:-0.016px;font-style:italic;-webkit-text-stroke:.3px #111;">View Details</div>
<div class="t" style="left:380.0px;top:477.3px;font-size:12.8px;color:#111;letter-spacing:-0.249px;font-style:italic;-webkit-text-stroke:.3px #111;">Image Sharing</div>
<div class="t" style="left:685.0px;top:477.3px;font-size:12.8px;color:#111;letter-spacing:-0.016px;font-style:italic;-webkit-text-stroke:.3px #111;">View Details</div>
<div class="t" style="left:380.0px;top:494.3px;font-size:12.8px;color:#111;letter-spacing:-0.267px;font-style:italic;-webkit-text-stroke:.3px #111;">Social Sharing</div>
<div class="t" style="left:685.0px;top:494.3px;font-size:12.8px;color:#111;letter-spacing:-0.016px;font-style:italic;-webkit-text-stroke:.3px #111;">View Details</div>
<div class="t" style="left:380.0px;top:511.3px;font-size:12.8px;color:#111;letter-spacing:-0.343px;font-style:italic;-webkit-text-stroke:.3px #111;">Business Lisitng</div>
<div class="t" style="left:685.0px;top:511.3px;font-size:12.8px;color:#111;letter-spacing:-0.016px;font-style:italic;-webkit-text-stroke:.3px #111;">View Details</div>
<div class="t" style="left:380.0px;top:528.3px;font-size:12.8px;color:#111;letter-spacing:-0.186px;font-style:italic;-webkit-text-stroke:.3px #111;">Classified Ads</div>
<div class="t" style="left:685.0px;top:528.3px;font-size:12.8px;color:#111;letter-spacing:-0.016px;font-style:italic;-webkit-text-stroke:.3px #111;">View Details</div>
<svg style="left:970px;top:455px" width="80" height="30" viewBox="970 455 80 30"><rect x="977.600" y="461.100" width="64.300" height="17.800" fill="none" stroke="#3f7a5c" stroke-width="1.400"/><rect x="1039.300" y="476.300" width="4.600" height="4.600" fill="#fff"/><rect x="1040" y="477" width="3.400" height="3.400" fill="#2e6b4b"/></svg>
<div class="abs" style="left:1193.0px;top:197.0px;width:2.0px;height:397.0px;background:#c8c8c8;"></div>
<div class="abs" style="left:1195.0px;top:178.0px;width:5.0px;height:416.0px;background:#fff;"></div>
<div class="abs" style="left:1194.0px;top:168.0px;width:6.0px;height:11.0px;background:#e6e6e6;"></div>
<div class="abs" style="left:1195.0px;top:194.0px;width:5.0px;height:3.0px;background:#e6e6e6;"></div>
<div class="abs" style="left:1195.0px;top:559.0px;width:5.0px;height:20.0px;background:#d0d0d0;"></div>
<div id="tabs" class="abs"></div>
<div class="abs" style="left:0.0px;top:594.0px;width:75.0px;height:1.0px;background:#c0c0c0;"></div>
<div class="abs" style="left:123.0px;top:594.0px;width:1077.0px;height:1.0px;background:#c0c0c0;"></div>
<div class="abs" style="left:75.0px;top:594.0px;width:48.0px;height:16.0px;background:#fff;"></div>
<div class="abs" style="left:123.0px;top:595.0px;width:1.0px;height:15.0px;background:#b0b0b0;"></div>
<div class="abs" style="left:216.5px;top:597.0px;width:1.0px;height:13.0px;background:#c2c2c2;"></div>
<div class="abs" style="left:385.0px;top:597.0px;width:1.0px;height:13.0px;background:#c2c2c2;"></div>
<div class="abs" style="left:497.5px;top:597.0px;width:1.0px;height:13.0px;background:#c2c2c2;"></div>
<div class="abs" style="left:640.0px;top:597.0px;width:1.0px;height:13.0px;background:#c2c2c2;"></div>
<div class="abs" style="left:678.5px;top:597.0px;width:1.0px;height:13.0px;background:#c2c2c2;"></div>
<div class="abs" style="left:765.0px;top:597.0px;width:1.0px;height:13.0px;background:#c2c2c2;"></div>
<div class="abs" style="left:852.5px;top:597.0px;width:1.0px;height:13.0px;background:#c2c2c2;"></div>
<div class="abs" style="left:953.5px;top:597.0px;width:1.0px;height:13.0px;background:#c2c2c2;"></div>
<div class="abs" style="left:1052.5px;top:597.0px;width:1.0px;height:13.0px;background:#c2c2c2;"></div>
<div class="t" style="left:82.5px;top:593.6px;font-size:12px;color:#217346;letter-spacing:0.231px;font-weight:bold;">Index</div>
<div class="t" style="left:134.0px;top:593.8px;font-size:12px;color:#505050;letter-spacing:0.069px;">Social Profile</div>
<div class="t" style="left:230.0px;top:593.8px;font-size:12px;color:#505050;letter-spacing:-0.066px;">Search Engine Submission</div>
<div class="t" style="left:398.5px;top:593.8px;font-size:12px;color:#505050;letter-spacing:0.184px;">Content sharing</div>
<div class="t" style="left:510.0px;top:593.8px;font-size:12px;color:#505050;letter-spacing:0.206px;">Directory Submission</div>
<div class="t" style="left:648.5px;top:593.8px;font-size:12px;color:#505050;letter-spacing:-1.339px;">SYS</div>
<div class="t" style="left:688.5px;top:593.8px;font-size:12px;color:#505050;letter-spacing:-0.348px;">PPT Sharing</div>
<div class="t" style="left:774.0px;top:593.8px;font-size:12px;color:#505050;letter-spacing:-0.155px;">PDF Sharing</div>
<div class="t" style="left:863.5px;top:593.8px;font-size:12px;color:#505050;letter-spacing:-0.004px;">Image Sharing</div>
<div class="t" style="left:964.0px;top:593.8px;font-size:12px;color:#505050;letter-spacing:0.008px;">Social Sharing</div>
<svg style="left:19px;top:600px" width="4" height="7" viewBox="0 0 4 7"><path d="M4 0v7L0 3.500z" fill="#c4c4c4"/></svg>
<svg style="left:41px;top:600px" width="4" height="7" viewBox="0 0 4 7"><path d="M0 0v7l4-3.500z" fill="#3c5a48"/></svg>
<div class="abs" style="left:1072.0px;top:605.5px;width:2.0px;height:2.0px;background:#3f7a5c;"></div>
<div class="abs" style="left:1075.5px;top:605.5px;width:2.0px;height:2.0px;background:#3f7a5c;"></div>
<div class="abs" style="left:1079.0px;top:605.5px;width:2.0px;height:2.0px;background:#3f7a5c;"></div>
<svg style="left:1091px;top:597px" width="13" height="13" viewBox="0 0 13 13"><circle cx="6.500" cy="6.500" r="5.800" fill="none" stroke="#666" stroke-width="1"/><path d="M6.500 3.500v6M3.500 6.500h6" stroke="#666" stroke-width="1"/></svg>
<div class="abs" style="left:1119.0px;top:600.0px;width:1.5px;height:1.5px;background:#b5b5b5;"></div>
<div class="abs" style="left:1119.0px;top:603.5px;width:1.5px;height:1.5px;background:#b5b5b5;"></div>
<div class="abs" style="left:1119.0px;top:607.0px;width:1.5px;height:1.5px;background:#b5b5b5;"></div>
<div class="abs" style="left:1133.0px;top:596.0px;width:13.0px;height:14.0px;background:#fff;"></div>
<div class="abs" style="left:1148.0px;top:596.0px;width:25.5px;height:14.0px;background:#fff;"></div>
<div class="abs" style="left:1175.0px;top:596.0px;width:18.0px;height:14.0px;background:#fff;"></div>
<svg style="left:1137px;top:599px" width="5" height="8" viewBox="0 0 5 8"><path d="M5 0v8L0 4z" fill="#666"/></svg>
<svg style="left:1183px;top:599px" width="5" height="8" viewBox="0 0 5 8"><path d="M0 0v8l5-4z" fill="#666"/></svg>
</div></body></html>
